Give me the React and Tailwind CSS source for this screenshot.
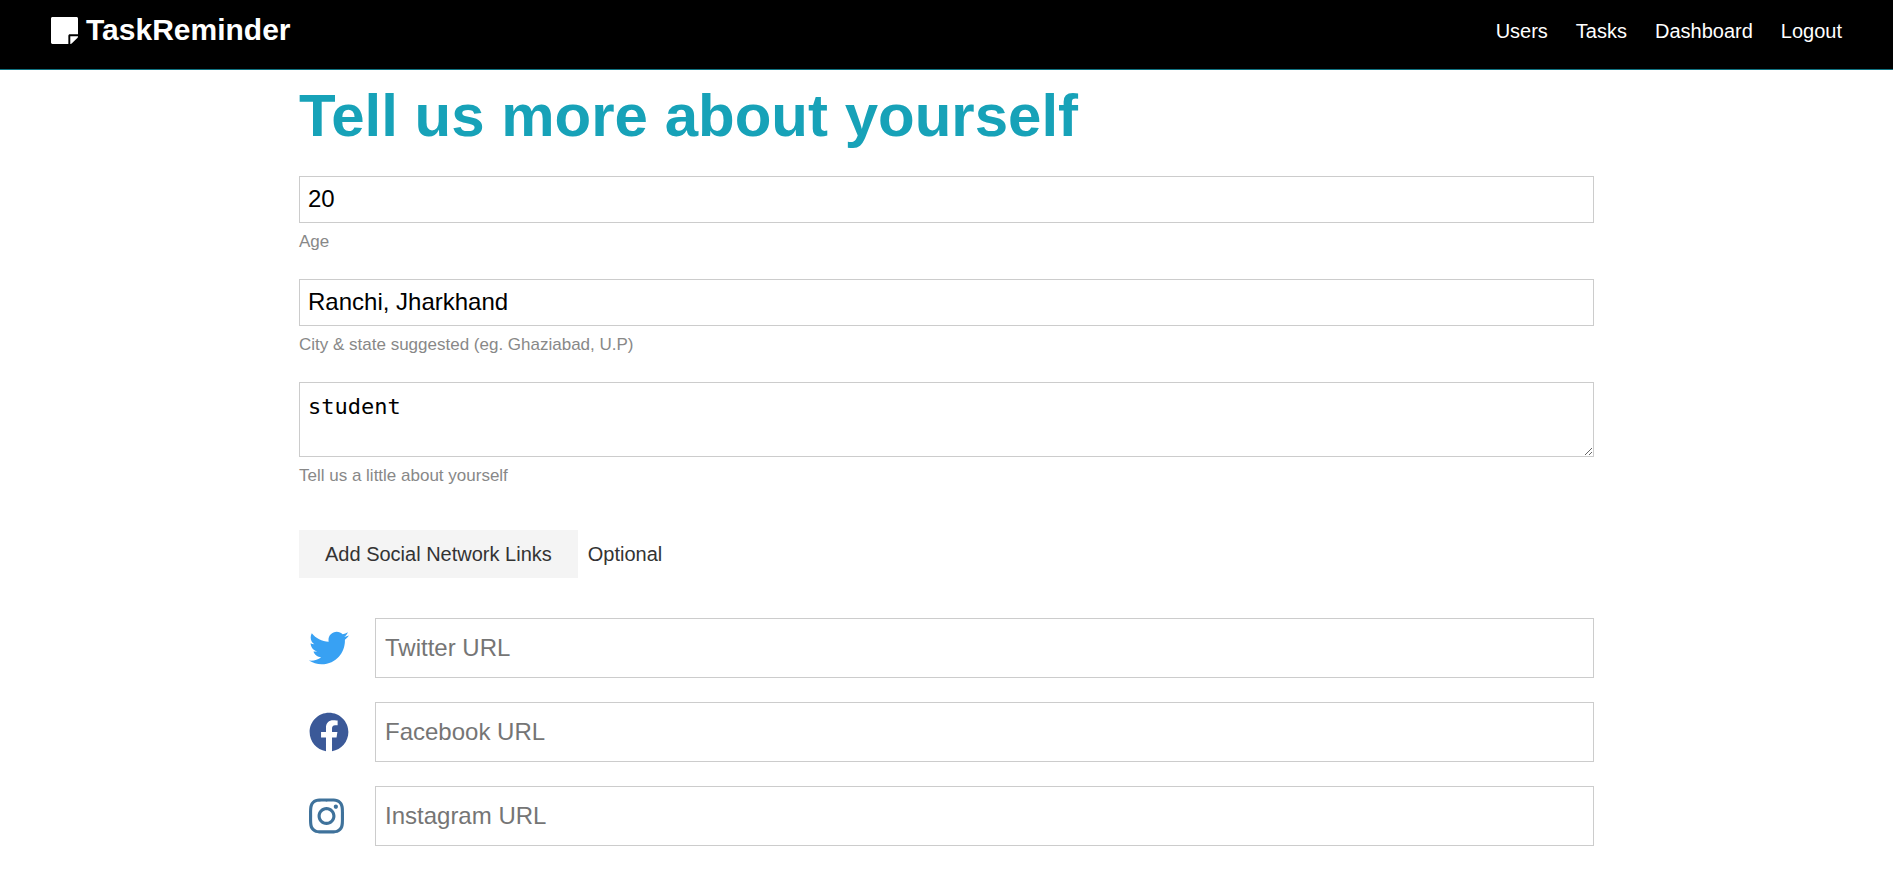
import React from 'react';
import { FaTwitter, FaFacebook, FaInstagram, FaStickyNote } from 'react-icons/fa';

const NAV_LINKS = ['Users', 'Tasks', 'Dashboard', 'Logout'];

const SOCIAL = [
  { id: 'twitter', label: 'Twitter URL', icon: <FaTwitter className="size-10 text-[#38a1f3]" /> },
  { id: 'facebook', label: 'Facebook URL', icon: <FaFacebook className="size-10 text-[#3b5998]" /> },
  { id: 'instagram', label: 'Instagram URL', icon: <FaInstagram className="h-10 w-[35px] text-[#3f729b]" /> },
];

function Navbar() {
  return (
    <header className="flex h-[70px] items-start justify-between border-b border-[#17a2b8]/70 bg-black px-[51px] pt-3 text-white">
      <a href="#home" className="flex items-center gap-2 text-[30px] leading-9 font-bold">
        <FaStickyNote className="h-[31px] w-[27px]" />
        TaskReminder
      </a>
      <nav className="flex gap-7 text-xl leading-[38px]">
        {NAV_LINKS.map((name) => (
          <a key={name} href={'#' + name.toLowerCase()}>{name}</a>
        ))}
      </nav>
    </header>
  );
}

function Field({ id, hint, children }) {
  return (
    <div className="mb-6 flex flex-col">
      {children}
      <label htmlFor={id} className="mt-1.5 text-[17px] leading-[26px] text-[#888888]">{hint}</label>
    </div>
  );
}

export default function App() {
  return (
    <div className="min-h-screen bg-white font-['Liberation_Sans',Arial,sans-serif] text-[#333333]">
      <Navbar />
      <main className="mx-auto max-w-[1375px] px-10 pt-3">
        <h1 className="mb-[26px] text-[60px] leading-[68px] font-bold text-[#17a2b8]">Tell us more about yourself</h1>
        <form onSubmit={(e) => e.preventDefault()}>
          <Field id="age" hint="Age">
            <input id="age" type="text" defaultValue="20" className="h-[47px] w-full border border-[#cccccc] px-2 pb-0.5 text-2xl text-black" />
          </Field>
          <Field id="location" hint="City &amp; state suggested (eg. Ghaziabad, U.P)">
            <input id="location" type="text" defaultValue="Ranchi, Jharkhand" className="h-[47px] w-full border border-[#cccccc] px-2 pb-0.5 text-2xl text-black" />
          </Field>
          <Field id="bio" hint="Tell us a little about yourself">
            <textarea id="bio" defaultValue="student" className="h-[75px] w-full resize-y border border-[#cccccc] px-2 py-2 font-['DejaVu_Sans_Mono',monospace] text-[22px] leading-8 text-black" />
          </Field>
          <div className="mt-[41px] mb-10 flex items-center gap-2.5 text-xl">
            <button type="button" className="h-12 bg-[#f4f4f4] px-[26px]">Add Social Network Links</button>
            <span>Optional</span>
          </div>
          <div className="flex flex-col gap-6 pb-8">
            {SOCIAL.map(({ id, label, icon }) => (
              <div key={id} className="flex items-center">
                <label htmlFor={id} aria-label={label} className="w-[76px] shrink-0 pl-2.5">{icon}</label>
                <input id={id} type="text" placeholder={label} className="h-[60px] min-w-0 flex-1 border border-[#cccccc] px-[9px] text-2xl text-black placeholder:text-[#757575]" />
              </div>
            ))}
          </div>
        </form>
      </main>
    </div>
  );
}
